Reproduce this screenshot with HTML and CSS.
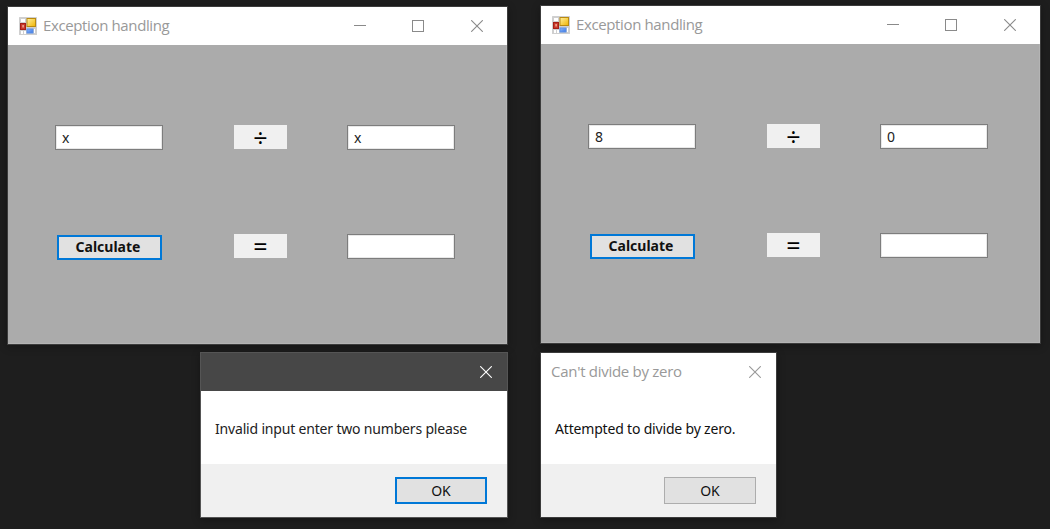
FILE: index.html
```html
<!DOCTYPE html>
<html lang="en">
<head>
<meta charset="utf-8">
<title>Exception handling</title>
<link rel="stylesheet" href="styles.css">
</head>
<body>
<svg class="defs" width="0" height="0" aria-hidden="true">
  <defs>
    <linearGradient id="gold" x1="0" y1="0" x2="1" y2="1"><stop offset="0" stop-color="#fff0a0"/><stop offset="1" stop-color="#f0b400"/></linearGradient>
    <linearGradient id="blue" x1="0" y1="0" x2="1" y2="1"><stop offset="0" stop-color="#8db9ff"/><stop offset="1" stop-color="#3a75e0"/></linearGradient>
    <symbol id="app" viewBox="0 0 18 18">
      <rect width="18" height="18" rx=".6" fill="#cfcfcf"/>
      <path fill="#fff" d="M2 2h4v3H2zM2 14h2v3H2zM5 14h2v3H5zM15 12h1v4h-1z"/>
      <rect x="1.5" y="6.5" width="5" height="6" fill="#c83a2a" stroke="#a51f17"/>
      <rect x="3.4" y="8" width="1.4" height="2.5" fill="#f3b0a0"/>
      <rect x="8" y="1.5" width="8.5" height="8" fill="url(#gold)" stroke="#b98a10"/>
      <rect x="8" y="12" width="6" height="4" fill="url(#blue)" stroke="#5b8fe8"/>
    </symbol>
    <symbol id="min" viewBox="0 0 12 12"><path d="M0 5.5h12" stroke="currentColor"/></symbol>
    <symbol id="max" viewBox="0 0 12 12"><rect x=".5" y=".5" width="11" height="11" fill="none" stroke="currentColor"/></symbol>
    <symbol id="close" viewBox="0 0 12 12"><path d="M.2.2l11.6 11.6M11.8.2L.2 11.8" stroke="currentColor" stroke-width="1.1"/></symbol>
  </defs>
</svg>

<section class="window form-left">
  <header class="titlebar">
    <svg class="app-icon"><use href="#app"/></svg>
    <h1 class="title">Exception handling</h1>
    <div class="controls">
      <svg class="control minimize"><use href="#min"/></svg>
      <svg class="control"><use href="#max"/></svg>
      <svg class="control"><use href="#close"/></svg>
    </div>
  </header>
  <div class="client">
    <div class="field">x</div><div class="operator">÷</div><div class="field">x</div>
    <button class="button calculate">Calculate</button><div class="operator">=</div><div class="field"></div>
  </div>
</section>

<section class="window form-right">
  <header class="titlebar">
    <svg class="app-icon"><use href="#app"/></svg>
    <h1 class="title">Exception handling</h1>
    <div class="controls">
      <svg class="control minimize"><use href="#min"/></svg>
      <svg class="control"><use href="#max"/></svg>
      <svg class="control"><use href="#close"/></svg>
    </div>
  </header>
  <div class="client">
    <div class="field">8</div><div class="operator">÷</div><div class="field">0</div>
    <button class="button calculate">Calculate</button><div class="operator">=</div><div class="field"></div>
  </div>
</section>

<section class="window dialog dialog-left">
  <header class="titlebar dark">
    <div class="controls"><svg class="control"><use href="#close"/></svg></div>
  </header>
  <p class="message">Invalid input enter two numbers please</p>
  <footer class="footer"><button class="button ok focused">OK</button></footer>
</section>

<section class="window dialog dialog-right">
  <header class="titlebar">
    <h2 class="title">Can't divide by zero</h2>
    <div class="controls"><svg class="control"><use href="#close"/></svg></div>
  </header>
  <p class="message strong">Attempted to divide by zero.</p>
  <footer class="footer"><button class="button ok">OK</button></footer>
</section>
</body>
</html>
```
FILE: styles.css
```css
* { box-sizing: border-box; }
body {
  margin: 0;
  width: 1050px;
  height: 529px;
  position: relative;
  overflow: hidden;
  background: #1e1e1e;
  font-family: "Noto Sans", "Open Sans", sans-serif;
}
.defs { position: absolute; }

/* Windows on the desktop */
.window {
  position: absolute;
  display: flex;
  flex-direction: column;
  width: 501px;
  height: 339px;
  border: 1px solid #3c3c3c;
  background: #fff;
  box-shadow: 0 2px 8px rgba(0, 0, 0, .3);
}
.form-left { left: 7px; top: 6px; }
.form-right { left: 540px; top: 5px; }
.dialog { top: 352px; height: 166px; }
.dialog-left { left: 200px; width: 308px; border-color: #555; }
.dialog-right { left: 540px; width: 237px; }

.titlebar {
  display: flex;
  align-items: center;
  flex: 0 0 38px;
  padding: 0 24px 0 11px;
  color: #999;
}
.titlebar.dark { background: #474747; color: #fff; }
.app-icon { width: 18px; height: 18px; margin-right: 6px; }
.title {
  margin: 0;
  padding-bottom: 2px;
  font: 400 15px/20px "Open Sans", sans-serif;
  letter-spacing: -.37px;
  white-space: nowrap;
}
.dialog .title { letter-spacing: -.28px; }
.controls { display: flex; gap: 47px; margin-left: auto; color: inherit; }
.window:not(.dialog) .controls { color: #8a8a8a; }
.control { width: 12px; height: 12px; }
.control.minimize { margin-right: -1px; }
.dialog .titlebar { padding: 0 15px 0 10px; }

.client {
  flex: 1;
  display: grid;
  grid-template-columns: 179px 113px 108px;
  grid-template-rows: 25px 25px;
  row-gap: 84px;
  align-items: start;
  padding: 80px 0 0 47px;
  background: #ababab;
  border: solid #b4b4b4;
  border-width: 0 1px 1px 0;
}
.field {
  width: 108px;
  height: 25px;
  padding-left: 6px;
  border: 1px solid #7d7d7d;
  background: #fff;
  box-shadow: inset 0 0 0 1px #e8e8e8;
  font-size: 14px;
  line-height: 23px;
  color: #222;
}
.operator {
  width: 53px;
  height: 24px;
  background: #f0f0f0;
  font: 400 25px/24px "Open Sans", sans-serif;
  text-align: center;
}
.button {
  padding: 0;
  border: 2px solid #0078d7;
  background: #e1e1e1;
  color: #111;
  font: 400 14px/20px "Noto Sans", sans-serif;
}
.calculate {
  width: 105px;
  height: 25px;
  margin: 1px 0 0 2px;
  padding: 0 3px 1px 0;
  font-weight: 700;
}

.message {
  flex: 0 0 73px;
  min-height: 0;
  margin: 0;
  padding: 1px 0 0 14px;
  font-size: 14px;
  line-height: 74px;
  letter-spacing: -.18px;
  color: #222;
  white-space: nowrap;
}
.message.strong { color: #111; }
.footer {
  flex: 1;
  display: flex;
  justify-content: flex-end;
  align-items: flex-start;
  padding: 13px 20px 0 0;
  background: #f0f0f0;
}
.ok { width: 92px; height: 27px; border: 1px solid #adadad; }
.ok.focused { border: 2px solid #0078d7; }
```
